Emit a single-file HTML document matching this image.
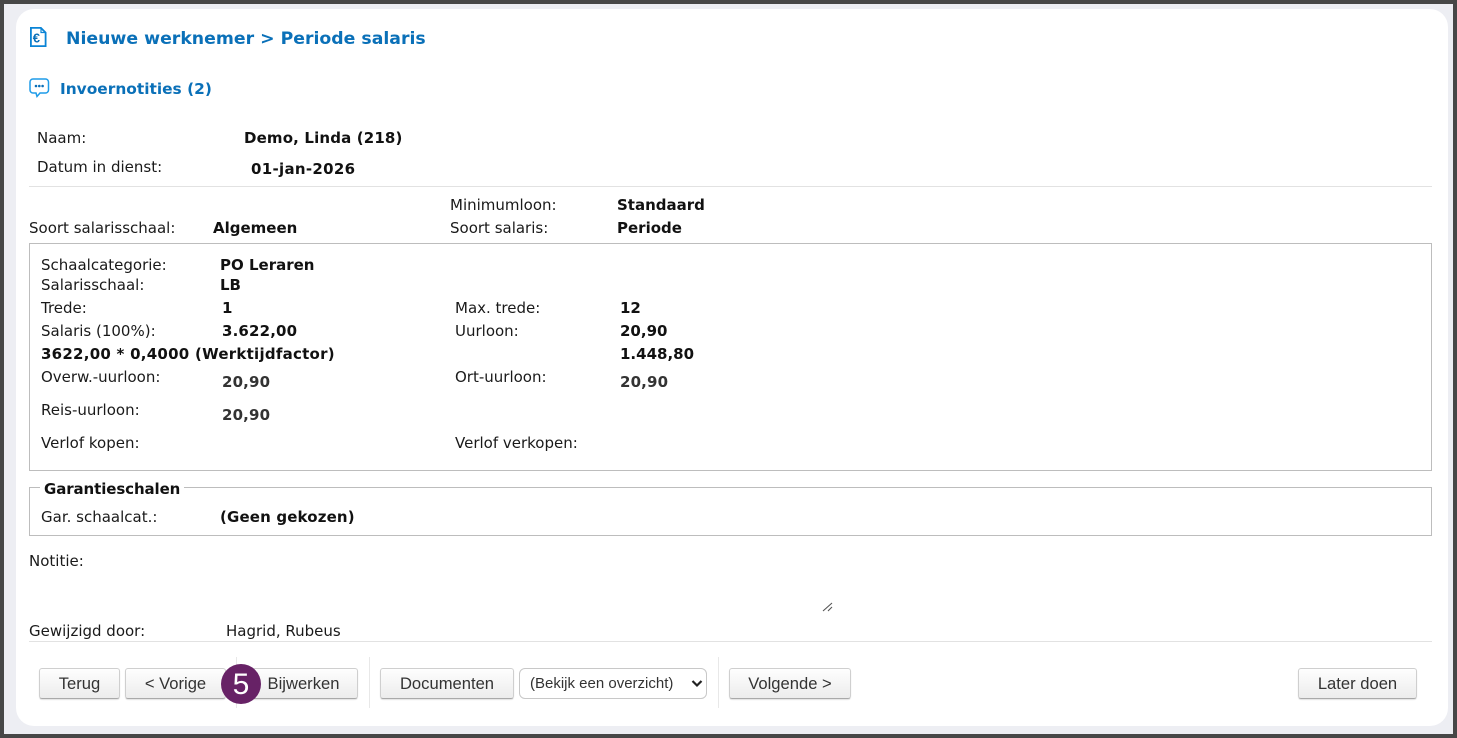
<!DOCTYPE html>
<html><head><meta charset="utf-8"><style>
html,body{margin:0;padding:0}
body{width:1457px;height:738px;position:relative;overflow:hidden;background:#edeef3;font-family:"DejaVu Sans","Liberation Sans",sans-serif;color:#1a1a1a}
.frame{position:absolute;left:0;top:0;width:1457px;height:738px;box-sizing:border-box;border:4px solid #474747;z-index:5;pointer-events:none}
.card{position:absolute;left:16px;top:9px;width:1432px;height:717px;background:#fff;border-radius:18px}
.t{position:absolute;font-size:15px;line-height:18px;white-space:nowrap}
.b{font-weight:bold;font-size:15px;color:#111}
.n{letter-spacing:.15px}
.g{color:#333}
.h{position:absolute;background:#e2e2e2;height:1px}
.box{position:absolute;box-sizing:border-box;border:1px solid #bdbdbd}
.btn{position:absolute;box-sizing:border-box;top:668px;height:31px;border:1px solid #cfcfcf;border-bottom:1px solid #a9a9a9;border-radius:3px;background:linear-gradient(#fefefe,#ececec);font:16.6px/29px "Liberation Sans",Arial,sans-serif;color:#333;text-align:center;box-shadow:0 1px 1px rgba(0,0,0,.12)}
.v{position:absolute;background:#e8e8e8;width:1px;top:657px;height:51px}
</style></head><body>
<div class="card"></div>
<svg style="position:absolute;left:29px;top:26px" width="19" height="22" viewBox="0 0 19 22" fill="none"><path d="M1.900 1.900h10l4.700 4.700V20.100H1.900z" stroke="#0a84d6" stroke-width="1.800"/><path d="M12 1.500v5h5" stroke="#0a84d6" stroke-width="1.200"/><text x="3.700" y="16.500" font-family="Liberation Sans" font-weight="bold" font-size="13" fill="#0a6fb8">€</text></svg>
<svg style="position:absolute;left:29px;top:78px" width="21" height="21" viewBox="0 0 21 21" fill="none"><path d="M4 1h12.500a3 3 0 0 1 3 3v8a3 3 0 0 1-3 3h-5.500l-3 3.500-1-3.500H4a3 3 0 0 1-3-3V4a3 3 0 0 1 3-3z" stroke="#1e9be8" stroke-width="1.500" fill="#fff"/><circle cx="7" cy="8" r="1.300" fill="#0a6fb8"/><circle cx="10.300" cy="8" r="1.300" fill="#0a6fb8"/><circle cx="13.600" cy="8" r="1.300" fill="#0a6fb8"/></svg>
<div class="t" style="left:66px;top:29px;font-size:17.3px;line-height:20px;font-weight:bold;color:#0a70b8">Nieuwe werknemer &gt; Periode salaris</div>
<div class="t" style="left:60px;top:80px;font-size:15.4px;font-weight:bold;color:#0a70b8">Invoernotities (2)</div>

<div class="t" style="left:37px;top:129px">Naam:</div>
<div class="t b n" style="left:244px;top:129px">Demo, Linda (218)</div>
<div class="t" style="left:37px;top:158px">Datum in dienst:</div>
<div class="t b" style="left:251px;top:160px;letter-spacing:.3px">01-jan-2026</div>
<div class="h" style="left:29px;top:186px;width:1403px"></div>

<div class="t" style="left:450px;top:196px">Minimumloon:</div>
<div class="t b" style="left:617px;top:196px">Standaard</div>
<div class="t" style="left:29px;top:219px">Soort salarisschaal:</div>
<div class="t b" style="left:213px;top:219px">Algemeen</div>
<div class="t" style="left:450px;top:219px">Soort salaris:</div>
<div class="t b" style="left:617px;top:219px">Periode</div>

<div class="box" style="left:29px;top:243px;width:1403px;height:228px"></div>
<div class="t" style="left:41px;top:256px">Schaalcategorie:</div>
<div class="t b" style="left:220px;top:256px">PO Leraren</div>
<div class="t" style="left:41px;top:276px">Salarisschaal:</div>
<div class="t b" style="left:220px;top:276px">LB</div>
<div class="t" style="left:41px;top:299px">Trede:</div>
<div class="t b" style="left:222px;top:299px">1</div>
<div class="t" style="left:455px;top:299px">Max. trede:</div>
<div class="t b" style="left:620px;top:299px">12</div>
<div class="t" style="left:41px;top:322px">Salaris (100%):</div>
<div class="t b n" style="left:222px;top:322px">3.622,00</div>
<div class="t" style="left:455px;top:322px">Uurloon:</div>
<div class="t b" style="left:620px;top:322px">20,90</div>
<div class="t b" style="left:41px;top:345px;letter-spacing:.25px">3622,00 * 0,4000 (Werktijdfactor)</div>
<div class="t b" style="left:620px;top:345px">1.448,80</div>
<div class="t" style="left:41px;top:368px">Overw.-uurloon:</div>
<div class="t b g n" style="left:222px;top:373px">20,90</div>
<div class="t" style="left:455px;top:368px">Ort-uurloon:</div>
<div class="t b g n" style="left:620px;top:373px">20,90</div>
<div class="t" style="left:41px;top:401px">Reis-uurloon:</div>
<div class="t b g n" style="left:222px;top:406px">20,90</div>
<div class="t" style="left:41px;top:434px">Verlof kopen:</div>
<div class="t" style="left:455px;top:434px">Verlof verkopen:</div>

<div class="box" style="left:29px;top:487px;width:1403px;height:49px"></div>
<div class="t b" style="left:40px;top:481px;background:#fff;padding:0 4px;height:16px;line-height:16px;letter-spacing:-.1px">Garantieschalen</div>
<div class="t" style="left:41px;top:508px">Gar. schaalcat.:</div>
<div class="t b n" style="left:220px;top:508px">(Geen gekozen)</div>

<div class="t" style="left:29px;top:552px">Notitie:</div>
<svg style="position:absolute;left:822px;top:602px" width="11" height="10" viewBox="0 0 11 10"><path d="M1 9L10 1M6 9L10 5" stroke="#555" stroke-width="1.100" fill="none"/></svg>
<div class="t" style="left:29px;top:622px">Gewijzigd door:</div>
<div class="t" style="left:226px;top:622px">Hagrid, Rubeus</div>
<div class="h" style="left:29px;top:641px;width:1403px"></div>

<div class="btn" style="left:39px;width:81px">Terug</div>
<div class="btn" style="left:125px;width:101px">&lt; Vorige</div>
<div class="v" style="left:236px"></div>
<div class="btn" style="left:247px;width:111px;padding-left:2px">Bijwerken</div>
<div class="v" style="left:369px"></div>
<div class="btn" style="left:380px;width:134px">Documenten</div>
<div style="position:absolute;box-sizing:border-box;left:519px;top:668px;width:188px;height:31px;border:1px solid #c8c8c8;border-radius:6px;background:#fff;font:15px/30px 'Liberation Sans',Arial,sans-serif;color:#333;padding-left:10px">(Bekijk een overzicht)<svg style="position:absolute;left:171px;top:10px" width="12" height="9" viewBox="0 0 12 9"><path d="M1.500 2L6 6.500L10.500 2" stroke="#222" stroke-width="2.200" fill="none"/></svg></div>
<div class="v" style="left:718px"></div>
<div class="btn" style="left:729px;width:122px">Volgende &gt;</div>
<div class="btn" style="left:1298px;width:119px">Later doen</div>

<div style="position:absolute;left:221px;top:664px;width:40px;height:40px;border-radius:50%;background:#672266;color:#fff;font:30px/41px 'Liberation Sans',Arial,sans-serif;text-align:center">5</div>
<div class="frame"></div>
</body></html>
